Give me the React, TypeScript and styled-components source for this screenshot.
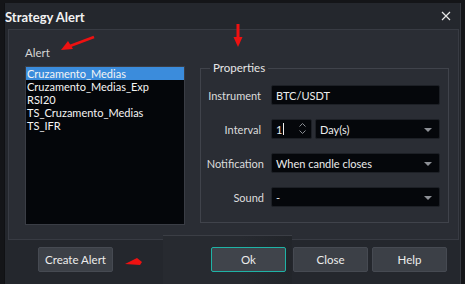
import React from "react";
import styled, { createGlobalStyle } from "styled-components";

const Global = createGlobalStyle`
  html, body { margin: 0; padding: 0; background: #141518; }
  * { box-sizing: border-box; }
`;

const Screen = styled.div`
  position: relative;
  width: 465px;
  height: 284px;
  padding: 3px 4px 0 4px;
  background: #141518;
  display: flex;
  font-family: Lato, "Liberation Sans", sans-serif;
  font-size: 11px;
  color: #e4e4e4;
  overflow: hidden;
`;

const Dialog = styled.div`
  flex: 1;
  display: flex;
  flex-direction: column;
  background: #24272d;
  border-right: 1px solid #363940;
  border-left: 1px solid #101114;
`;

const TitleBar = styled.div`
  height: 26px;
  flex: none;
  display: flex;
  align-items: center;
  justify-content: space-between;
  padding: 0 9px 0 0;
`;

const Title = styled.div`
  font-weight: 700;
  font-size: 13px;
  color: #f2f2f2;
  padding-top: 1px;
`;

const CloseBtn = styled.div`
  width: 10px;
  height: 10px;
  display: flex;
`;

const Panel = styled.div`
  height: 211px;
  flex: none;
  margin: 0 1px 0 3px;
  border: 1px solid #383b43;
  background: #2a2d34;
  display: flex;
  padding: 16px 0 0 16px;
`;

const AlertColumn = styled.div`
  display: flex;
  flex-direction: column;
  gap: 6px;
`;

const SectionLabel = styled.div`
  height: 14px;
  line-height: 14px;
  font-size: 11.5px;
  color: #d6d6d6;
`;

const ListBox = styled.div`
  width: 160px;
  height: 159px;
  background: #04060a;
  border: 1px solid #3a3d45;
  display: flex;
  flex-direction: column;
`;

const ListItem = styled.div<{ $selected?: boolean }>`
  height: 13px;
  line-height: 13px;
  padding-left: 1px;
  color: #f4f4f4;
  font-size: 11px;
  background: ${(p) => (p.$selected ? "#3b8cdc" : "transparent")};
  white-space: nowrap;
`;

const GroupBox = styled.div`
  position: relative;
  width: 249px;
  height: 155px;
  margin: 22px 0 0 15px;
  border: 1px solid #40434b;
  padding: 16px 0 0 0;
  display: flex;
  flex-direction: column;
  gap: 14px;
`;

const Legend = styled.div`
  position: absolute;
  left: 9px;
  top: -8px;
  padding: 0 3px;
  background: #2a2d34;
  color: #e6e6e6;
  font-size: 11.5px;
  line-height: 14px;
`;

const Row = styled.div`
  display: flex;
  align-items: center;
  height: 20px;
`;

const RowLabel = styled.div<{ $pad: number }>`
  width: 70px;
  text-align: right;
  padding-right: ${(p) => p.$pad}px;
  color: #dcdcdc;
  white-space: nowrap;
`;

const Field = styled.div<{ $w: number }>`
  position: relative;
  width: ${(p) => p.$w}px;
  height: 20px;
  background: #05070b;
  border: 1px solid #1d2026;
  border-radius: 2px;
  display: flex;
  align-items: center;
  padding-left: 4px;
  color: #ececec;
  white-space: nowrap;
`;

const Pair = styled.div`
  display: flex;
  gap: 3px;
`;

const Caret = styled.span`
  display: inline-block;
  width: 1px;
  height: 12px;
  background: #f0f0f0;
  margin-left: 1px;
`;

const Spin = styled.div`
  position: absolute;
  right: 5px;
  top: 3px;
  display: flex;
  flex-direction: column;
  gap: 3px;
`;

const DropArrow = styled.div`
  position: absolute;
  right: 7px;
  top: 8px;
  width: 0;
  height: 0;
  border-left: 4px solid transparent;
  border-right: 4px solid transparent;
  border-top: 4px solid #8d9096;
`;

const Footer = styled.div`
  flex: 1;
  display: flex;
  align-items: flex-start;
  padding: 7px 13px 0 33px;
`;

const Button = styled.div<{ $primary?: boolean; $mr?: number }>`
  position: relative;
  z-index: 2;
  width: 75px;
  height: 25px;
  display: flex;
  align-items: center;
  justify-content: center;
  background: ${(p) => (p.$primary ? "#40444b" : "#3c4047")};
  border: 1px solid ${(p) => (p.$primary ? "#1fb3a6" : "#464a52")};
  border-radius: 2px;
  color: #ececec;
  font-size: 11.5px;
  margin-right: ${(p) => p.$mr ?? 0}px;
`;

const Spacer = styled.div`
  flex: 1;
`;

const Ghost = styled.div`
  position: absolute;
  left: 163px;
  top: 235px;
  width: 129px;
  height: 49px;
  border-top: 1px solid #3b3e45;
  background: linear-gradient(90deg, #272a30 0%, #272a30 60%, #22252a 100%);
  z-index: 1;
`;

const Marks = styled.svg`
  position: absolute;
  left: 0;
  top: 0;
  z-index: 5;
  pointer-events: none;
`;

const items = [
  "Cruzamento_Medias",
  "Cruzamento_Medias_Exp",
  "RSI20",
  "TS_Cruzamento_Medias",
  "TS_IFR",
];

export default function App() {
  return (
    <>
      <Global />
      <Screen>
        <Dialog>
          <TitleBar>
            <Title>Strategy Alert</Title>
            <CloseBtn>
              <svg width="10" height="10" viewBox="0 0 10 10">
                <path d="M1 1 L9 9 M9 1 L1 9" stroke="#e8e8e8" strokeWidth="1.2" />
              </svg>
            </CloseBtn>
          </TitleBar>
          <Panel>
            <AlertColumn>
              <SectionLabel>Alert</SectionLabel>
              <ListBox>
                {items.map((it, i) => (
                  <ListItem key={it} $selected={i === 0}>
                    {it}
                  </ListItem>
                ))}
              </ListBox>
            </AlertColumn>
            <GroupBox>
              <Legend>Properties</Legend>
              <Row>
                <RowLabel $pad={10}>Instrument</RowLabel>
                <Field $w={169}>BTC/USDT</Field>
              </Row>
              <Row>
                <RowLabel $pad={10}>Interval</RowLabel>
                <Pair>
                  <Field $w={41}>
                    1<Caret />
                    <Spin>
                      <svg width="7" height="4" viewBox="0 0 7 4">
                        <path d="M0.5 3.5 L3.5 0.5 L6.5 3.5" stroke="#8a8d93" fill="none" />
                      </svg>
                      <svg width="7" height="4" viewBox="0 0 7 4">
                        <path d="M0.5 0.5 L3.5 3.5 L6.5 0.5" stroke="#8a8d93" fill="none" />
                      </svg>
                    </Spin>
                  </Field>
                  <Field $w={125}>
                    Day(s)
                    <DropArrow />
                  </Field>
                </Pair>
              </Row>
              <Row>
                <RowLabel $pad={7}>Notification</RowLabel>
                <Field $w={169}>
                  When candle closes
                  <DropArrow />
                </Field>
              </Row>
              <Row>
                <RowLabel $pad={7}>Sound</RowLabel>
                <Field $w={169}>
                  -
                  <DropArrow />
                </Field>
              </Row>
            </GroupBox>
          </Panel>
          <Footer>
            <Button>Create Alert</Button>
            <Spacer />
            <Button $primary $mr={7}>Ok</Button>
            <Button $mr={4}>Close</Button>
            <Button>Help</Button>
          </Footer>
        </Dialog>
        <Ghost />
        <Marks width="465" height="284" viewBox="0 0 465 284">
          <path d="M94 37 L70 46" stroke="#ee1111" strokeWidth="2.5" />
          <polygon points="61,50 68,41 73,49" fill="#ee1111" />
          <path d="M238 24 L238 39" stroke="#ee1111" strokeWidth="3" />
          <polygon points="233.5,37 242.5,37 238,47" fill="#ee1111" />
          <polygon points="125,264 137,258 142,262 140,265" fill="#ee1111" />
        </Marks>
      </Screen>
    </>
  );
}
